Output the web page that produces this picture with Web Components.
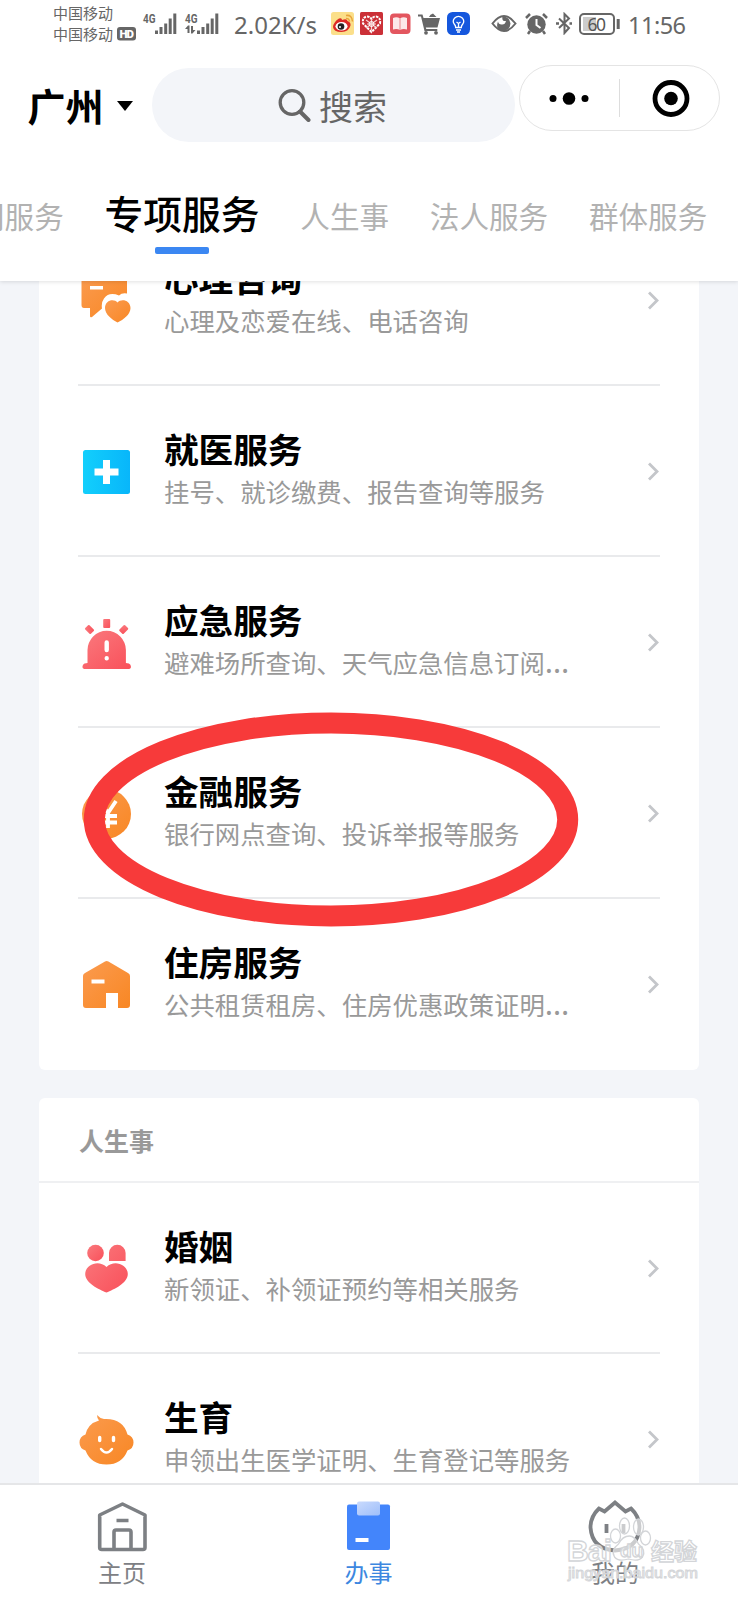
<!DOCTYPE html>
<html lang="zh-CN">
<head>
<meta charset="utf-8">
<title>办事</title>
<style>
html,body{margin:0;padding:0}
body{width:738px;height:1600px;overflow:hidden;background:#fff;font-family:"Noto Sans CJK SC","Noto Sans",sans-serif;color:#000}
</style>
</head>
<body>
<service-app></service-app>
<script>
const define = (name, html, setup) => {
  const t = document.createElement('template');
  t.innerHTML = html;
  customElements.define(name, class extends HTMLElement {
    constructor() {
      super();
      this.attachShadow({mode: 'open'}).appendChild(t.content.cloneNode(true));
    }
    connectedCallback() { if (setup) setup(this, this.shadowRoot); }
  });
};

const icons = {
  talk: `<path fill="url(#o)" d="M4 0h41q2 0 2 2v16.500q-5-1-8 2-10-4-15 3-3 4-2 10l-10 8.500q-2 1-2-1v-8H4q-2.500 0-2.500-3V2q0-2 2-2z"/><path fill="#fff" d="M10 11h13v3.500H10z"/><path fill="url(#o)" d="M37.500 47.500C32 44.500 25 39.500 25 33c0-8 9-10 12.500-5.500C41 23 50.500 25 50.500 33c0 6.500-7 11.500-13 14.500z"/>`,
  med: `<rect x="3" y="4" width="47" height="44" rx="2.500" fill="url(#b)"/><path fill="#fff" d="M23 14h7v8.500h8.500v7H30V38h-7v-8.500h-8.500v-7H23z"/>`,
  alarm: `<g fill="url(#r)"><rect x="23.200" y="2" width="7" height="9" rx="1"/><rect x="-3" y="-4" width="6" height="8" rx="1" transform="translate(9.500 12.500) rotate(-45)"/><rect x="-3" y="-4" width="6" height="8" rx="1" transform="translate(43.700 12.500) rotate(45)"/><path d="M7.500 46V33a19.200 19.200 0 0 1 38.400 0v13l3 .5q2 1 2 3v.5q0 2-3 2H5.500q-3 0-3-2v-.5q0-2 2-3z"/></g><path stroke="#fff" stroke-width="4.400" stroke-linecap="round" d="M26.700 25.500v7.500M26.700 41.200v.1"/>`,
  yen: `<circle cx="26.500" cy="26" r="24.500" fill="url(#o)"/><path fill="none" stroke="#fff" stroke-width="3.800" d="M19 13l9 12L36 13M28 24v16M18 28h19M18 34.500h19"/>`,
  house: `<path fill="url(#o)" d="M3 17q0-2 2-3L25 2.500q1.700-1 3.400 0L48 14q2 1 2 3v29q0 3-3 3h-9V34H26v15H6q-3 0-3-3z"/><path fill="#fff" d="M11.500 20.500h13v4h-13z"/>`,
  pair: `<g fill="url(#r)"><circle cx="15.500" cy="10" r="8.300"/><path d="M29 18v-8a8.300 8.300 0 0 1 16.600 0v8zM26.500 49.500C19 46.500 5.200 40 5.200 31c0-9.500 13.500-15 21.300-7 7.800-8 21.300-2.500 21.300 7 0 9-13.800 15.500-21.300 18.500z"/></g>`,
  baby: `<path fill="url(#o)" d="M17 1q3 3.500 7 4 19-1 23.500 15.500 6 2 6 8t-6 8Q42 50.500 26.500 50.500T5.500 36.500q-6-2-6-8t6-8Q8 9.500 19 6.500q-2-2-2-5.500z"/><path stroke="#fff" stroke-width="3.400" stroke-linecap="round" d="M19.700 23.500v3M33.500 23.500v3"/><path fill="none" stroke="#fff" stroke-width="2.500" stroke-linecap="round" d="M21 35q5.500 7 11 0"/>`
};
const gradients = `<defs>
<linearGradient id="o" x2="1" y2="1"><stop stop-color="#fb9b4f"/><stop offset="1" stop-color="#f88724"/></linearGradient>
<linearGradient id="b" x2="1" y2="0"><stop stop-color="#12cffc"/><stop offset="1" stop-color="#08b6fa"/></linearGradient>
<linearGradient id="r" x2="1" y2="1"><stop stop-color="#fa7a7e"/><stop offset="1" stop-color="#f9505a"/></linearGradient></defs>`;

define('signal-meter', `<style>:host{display:block;width:36px;height:26px}:host svg{display:block;overflow:visible}.d{display:none}:host([data]) .d{display:block}</style>
<svg width="36" height="26" fill="#666"><text x="0" y="11.500" font-family="Roboto" font-weight="700" font-size="13" textLength="12.500" lengthAdjust="spacingAndGlyphs">4G</text>
<path d="M12 19.500h3V23h-3zM16.500 16h3v7h-3zM21.200 12.500h3V23h-3zM25.700 7.500h3V23h-3zM30.300 2.500h3V23h-3z"/>
<path class="d" d="M2.500 22v-4H0l3-3.500h1.500V22zM6 15h2v4h2.500L7.500 22.500H6z"/></svg>`);

define('status-bar', `<style>
:host{display:flex;height:50px;padding-left:53px;box-sizing:border-box;color:#666;align-items:flex-start}
svg{display:block;flex:none}
.op{width:90px;padding-top:2px;font-size:15px;line-height:21.300px}
.op div{display:flex;align-items:center;white-space:nowrap}
.op svg{margin-left:4px}
.sig{display:flex;gap:6px;padding-top:11px;width:91px}
.rate{width:97px;font:24px/28px "Noto Sans",sans-serif;padding-top:11px;white-space:nowrap}
.apps{display:flex;gap:6px;padding-top:12px;width:160px}
.sys{display:flex;gap:7px;padding-top:12px;width:137px}
.time{font:23.500px/28px "Noto Sans",sans-serif;padding-top:11px;letter-spacing:-.5px}
</style>
<div class="op"><div>中国移动</div><div>中国移动<svg width="20" height="14"><rect width="19" height="13.500" rx="3" fill="#666"/><text x="2.500" y="11" font-family="Roboto" font-size="11.500" font-weight="900" fill="#fff" textLength="14.500">HD</text></svg></div></div>
<div class="sig"><signal-meter></signal-meter><signal-meter data></signal-meter></div>
<div class="rate">2.02K/s</div>
<div class="apps">
<svg width="23" height="23"><rect width="23" height="23" rx="2.500" fill="#fbdf8a"/><path fill="#dc2a25" d="M8 6.500q3-1 3 1.500 5-2 5.500 1 3.500 1 3 4.500-1.500 6-9 6.500-8 0-8.500-5Q2.500 10 8 6.500z"/><ellipse cx="10.500" cy="14.200" rx="6" ry="4.300" fill="#fff"/><circle cx="10" cy="14.500" r="3.300" fill="#222"/><circle cx="9" cy="15" r="1" fill="#fff"/><path d="M15 6.500q3-.5 3.500 3M15 3.500q6-1 6.500 6" fill="none" stroke="#e8a33a" stroke-width="1.500"/></svg>
<svg width="23" height="23"><rect width="23" height="23" rx="1.500" fill="#cb3037"/><path d="M11.500 20L3 11.500q-1-6 4-7 3 0 4.500 2.500Q13 4.500 16 4.500q5 1 4 7z" fill="none" stroke="#fff" stroke-width="2" stroke-dasharray="2.500 1"/><path d="M6 8l11 8M17 8L6 16M11.500 7v11M7 12h9" stroke="#f5cfd0" stroke-width="1.200"/><circle cx="11.500" cy="12" r="2.500" fill="none" stroke="#fff"/></svg>
<svg width="23" height="23"><rect x="1" y="1.500" width="20.500" height="20.500" rx="4" fill="#e3565f"/><path fill="#fce9e9" d="M4 6q4-1.500 7 .5 3-2 7-.5v11.500q-4-1-7 .5-3-1.500-7-.5z"/><path d="M11 6.500V18" stroke="#e9898e"/></svg>
<svg width="23" height="23" fill="#666"><path d="M0 2.500h4.500l1 3.500H22l-2.500 9.500H7.800l.5 1.500h11v2H6.500L3 4.500H0zM11 5q1-3 4-3.500l3.500 3.500z"/><circle cx="8" cy="20.800" r="1.900"/><circle cx="18" cy="20.800" r="1.900"/></svg>
<svg width="23" height="23"><rect width="23" height="23" rx="5.500" fill="#1557dd"/><g fill="none" stroke="#fff" stroke-width="1.300"><path d="M8.700 15.500q0-2-1.500-3.500-2-3 .2-5.700 4-3.800 8.200 0 2.200 2.700.2 5.700-1.500 1.500-1.500 3.500zM9 18h5M10 20h3M9.500 10l2 1.500 2-1.500M11.500 11.500v4"/></g></svg>
</div>
<div class="sys">
<svg width="26" height="23"><path d="M1.500 11.500Q13-3.500 24.500 11.500 13 26.500 1.500 11.500z" fill="none" stroke="#666" stroke-width="2"/><path fill="#666" d="M11.500 4.500q-1 5 3.500 4.500-1 4-4.500 3.500-3 0-3.500-3-3 8 4 9 8 .5 8.500-7-1-7-8-7z"/></svg>
<svg width="25" height="23"><circle cx="12.500" cy="12.500" r="9.200" fill="#666"/><path d="M12.500 7v6l4 3" stroke="#fff" stroke-width="2" fill="none"/><path d="M2 6l4-4M23 6l-4-4M6 19l-2 3M19 19l2 3" stroke="#666" stroke-width="2.500"/></svg>
<svg width="16" height="23"><path d="M3 6.500l10 9.500-4.500 5V2l4.500 4.500L3 16" fill="none" stroke="#666" stroke-width="2"/><path d="M0 11.500h3M13.500 11.500h3" stroke="#666" stroke-width="2.500"/></svg>
<svg width="42" height="23"><rect x="1" y="2" width="34" height="20" rx="4" fill="#fff" stroke="#666" stroke-width="2"/><rect x="4" y="5" width="13" height="14" fill="#ccc"/><text x="8.500" y="18.500" font-family="Noto Sans" font-size="17.500" fill="#555" textLength="18.500">60</text><path d="M39.200 7v10" stroke="#666" stroke-width="3"/></svg>
</div>
<div class="time">11:56</div>`);

define('search-box', `<style>:host{display:flex;width:363px;height:74px;border-radius:37px;background:#f3f5f9;align-items:center;justify-content:center;gap:8px;color:#666;font-size:34px;line-height:50px;box-sizing:border-box;padding-right:2px}
svg{display:block}span{margin-top:1px}</style>
<svg width="33" height="34" fill="none" stroke="#666" stroke-width="3.300"><circle cx="14" cy="14.500" r="11.800"/><path d="M22 23.500l8.500 8.500" stroke-width="4" stroke-linecap="round"/></svg><span><slot></slot></span>`);

define('mini-capsule', `<style>:host{display:block;width:201px;height:66px;box-sizing:border-box;border:1.500px solid #e4e4e4;border-radius:33px}svg{display:block}</style>
<svg width="198" height="64"><circle cx="33" cy="32.500" r="3.500"/><circle cx="49" cy="32.500" r="6.300"/><circle cx="65" cy="32.500" r="3.500"/><path d="M99.500 13v38" stroke="#ddd"/><circle cx="151" cy="32.500" r="16" fill="none" stroke="#000" stroke-width="4.800"/><circle cx="151" cy="32.500" r="6.800"/></svg>`);

define('app-header', `<style>:host{display:flex;height:100px;padding:15px 0 0 27.500px;box-sizing:border-box}
.city{display:flex;width:124.500px;height:74px;margin-top:3px;align-items:center;font-size:38px;line-height:56px;font-weight:700}
.city i{margin:1px 0 0 13.500px;border:8.500px solid transparent;border-top:10px solid #000;border-bottom:0}
search-box{margin:3px 4px 0 0}</style>
<div class="city"><span><slot></slot></span><i></i></div><search-box>搜索</search-box><mini-capsule></mini-capsule>`);

define('tab-item', `<style>:host{display:block;font-size:29.600px;line-height:44px;color:#b2b2b2;white-space:nowrap;padding-top:44px}
:host([active]){font-size:38.800px;line-height:56px;color:#000;font-weight:500;padding-top:34px}
i{display:none}:host([active]) i{display:block;width:54px;height:7px;border-radius:2px;background:#3b87f2;margin:6.500px auto 0}</style><slot></slot><i></i>`);

define('tab-strip', `<style>:host{display:flex;position:relative;z-index:1;height:131px;gap:40.700px;background:#fff;box-shadow:0 1px 4px rgba(0,0,0,.12);clip-path:inset(0 0 -6px 0)}</style>
<slot></slot>`);

define('service-row', `<style>:host{display:flex;height:171px;box-sizing:border-box;margin:0 39px;border-bottom:2px solid #e9eaec;padding-left:2px;align-items:flex-start}
:host([last]){border-color:transparent}
svg{display:block;flex:none;overflow:visible}
.ic{margin-top:60px}
.t{flex:1;margin-left:31px;padding-top:40px;white-space:nowrap}
.n{font-size:34.600px;line-height:44px;font-weight:700}
.s{font-size:25.400px;line-height:36px;height:36px;color:#999;margin-top:3px}
.ch{margin-top:76px}</style>
<svg class="ic" width="53" height="53"></svg><div class="t"><div class="n"></div><div class="s"><slot></slot></div></div>
<svg class="ch" width="13" height="19"><path d="M2 1.500l8 8-8 8" fill="none" stroke="#c4c6ca" stroke-width="2.800"/></svg>`,
(el, root) => {
  root.querySelector('.ic').innerHTML = gradients + icons[el.getAttribute('icon')];
  root.querySelector('.n').textContent = el.getAttribute('name');
});

define('service-card', `<style>:host{display:block;margin:0 39px 28px 39px;border-radius:6px;background:#fff}
.h{display:none}:host([heading]) .h{display:block;height:85px;box-sizing:border-box;border-bottom:2px solid #eff0f2;padding:23px 40px;font-size:25px;line-height:38px;font-weight:600;color:#999}</style>
<div class="h"></div><slot></slot>`, (el, root) => { root.querySelector('.h').textContent = el.getAttribute('heading') || ''; });

define('nav-item', `<style>:host{display:flex;width:80px;flex-direction:column;align-items:center;color:#7d8084;font-size:24px;line-height:34px;padding-top:14px}
:host([active]){color:#3d87e0}::slotted(svg){display:block}.l{margin-top:1px}</style><slot name="icon"></slot><div class="l"><slot></slot></div>`);

define('site-watermark', `<style>:host{display:block;position:absolute;right:38px;bottom:15px;width:134px;height:72px}svg{display:block;overflow:visible}</style>
<svg width="134" height="72" font-family="Liberation Sans" font-weight="700" stroke="#d3d5d8" stroke-width="1.300" fill="#fff" fill-opacity=".6">
<g transform="translate(-2.500 -1)"><ellipse cx="61" cy="14" rx="5" ry="8"/><ellipse cx="75" cy="15" rx="5" ry="8"/><ellipse cx="52" cy="24" rx="5" ry="7"/><ellipse cx="82" cy="26" rx="5" ry="7"/><path d="M66 24q5 0 9 8 8 6 4 13-4 5-14 2-10 3-14-2-4-7 4-13 4-8 11-8z"/></g>
<text x="1" y="48" font-size="30" textLength="45">Bai</text><text x="54" y="44" font-size="19">du</text><text x="85" y="47" font-family="Noto Sans CJK SC" font-size="23" textLength="46">经验</text>
<text x="2" y="65" font-size="14" font-weight="400" stroke-width=".9" textLength="130" lengthAdjust="spacingAndGlyphs">jingyan.baidu.com</text></svg>`);

define('bottom-nav', `<style>:host{display:flex;position:relative;height:117px;box-sizing:border-box;border-top:2px solid #e5e6e8;background:#fff;padding:0 83px 0 82px;justify-content:space-between}</style>
<nav-item><svg slot="icon" width="50" height="55" fill="none" stroke="#7d8084" stroke-width="3.600" stroke-linejoin="round"><path d="M2.700 16L25.500 5 48 16v32.500q0 2-2 2H4.700q-2 0-2-2zM17 50V33q0-2 2-2h13q2 0 2 2v17M19.500 21.500h12"/></svg>主页</nav-item>
<nav-item active><svg slot="icon" width="44" height="55"><defs><linearGradient id="c" x2="1" y2="1"><stop stop-color="#c9dafd"/><stop offset="1" stop-color="#9fbffa"/></linearGradient></defs><rect x="0" y="5.500" width="43" height="45.500" rx="2" fill="#4385fb"/><rect x="10" y="2.500" width="23" height="14" rx="2" fill="url(#c)"/><path d="M8.500 41h13" stroke="#fff" stroke-width="4"/></svg>办事</nav-item>
<nav-item><svg slot="icon" width="54" height="55" fill="none" stroke="#7d8084" stroke-width="3.800"><path d="M16.500 12.500L27 3.500l10.500 9 5.500-3q8.500 8 8.500 19Q50 50 27 51.500 4 50 2.500 28.500q0-11 8.500-19z"/><path d="M18.500 25v9M35.500 25v9"/></svg>我的</nav-item>
<site-watermark></site-watermark>`);

define('hand-ring', `<style>:host{display:block;position:absolute;left:83px;top:430.500px;width:496px;height:215px;pointer-events:none}svg{display:block}</style>
<svg width="496" height="215"><ellipse cx="248" cy="107.500" rx="236.700" ry="96.500" fill="none" stroke="#f73a3a" stroke-width="21"/></svg>`);

define('service-app', `<style>:host{display:flex;flex-direction:column;width:738px;height:1600px}
main{flex:1;min-height:0;position:relative;overflow:hidden;background:#f3f5f9}
.first{margin-top:-66px}.cut{margin-left:-25px}tab-strip{flex:none}
.more{font-family:"Noto Sans",sans-serif;font-size:31px;line-height:1}
</style>
<status-bar></status-bar>
<app-header>广州</app-header>
<tab-strip><tab-item class="cut">门服务</tab-item><tab-item active>专项服务</tab-item><tab-item>人生事</tab-item><tab-item>法人服务</tab-item><tab-item>群体服务</tab-item></tab-strip>
<main>
<service-card class="first">
<service-row icon="talk" name="心理咨询">心理及恋爱在线、电话咨询</service-row>
<service-row icon="med" name="就医服务">挂号、就诊缴费、报告查询等服务</service-row>
<service-row icon="alarm" name="应急服务">避难场所查询、天气应急信息订阅<span class="more">…</span></service-row>
<service-row icon="yen" name="金融服务">银行网点查询、投诉举报等服务</service-row>
<service-row last icon="house" name="住房服务">公共租赁租房、住房优惠政策证明<span class="more">…</span></service-row>
</service-card>
<service-card heading="人生事">
<service-row icon="pair" name="婚姻">新领证、补领证预约等相关服务</service-row>
<service-row last icon="baby" name="生育">申领出生医学证明、生育登记等服务</service-row>
</service-card>
<hand-ring></hand-ring>
</main>
<bottom-nav></bottom-nav>`);
</script>
</body>
</html>
